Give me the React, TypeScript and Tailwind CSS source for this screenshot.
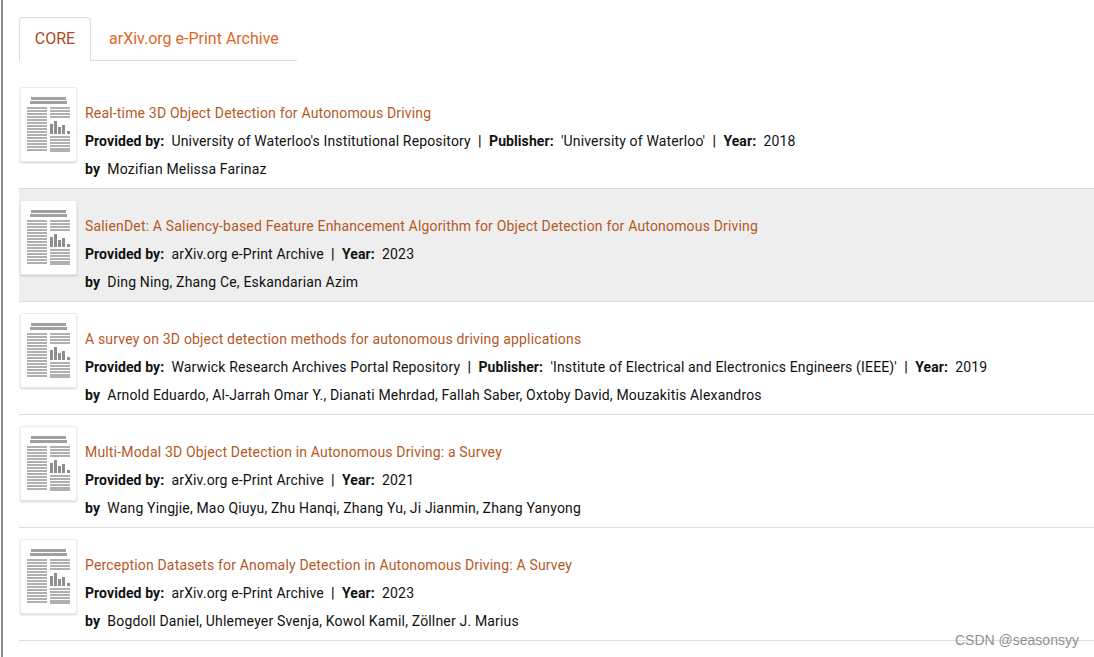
import React from 'react';

interface Meta {
  label: string;
  value: string;
}

interface Article {
  title: string;
  meta: Meta[];
  authors: string;
  highlighted?: boolean;
}

const articles: Article[] = [
  {
    title: 'Real-time 3D Object Detection for Autonomous Driving',
    meta: [
      { label: 'Provided by:', value: "University of Waterloo's Institutional Repository" },
      { label: 'Publisher:', value: "'University of Waterloo'" },
      { label: 'Year:', value: '2018' },
    ],
    authors: 'Mozifian Melissa Farinaz',
  },
  {
    title: 'SalienDet: A Saliency-based Feature Enhancement Algorithm for Object Detection for Autonomous Driving',
    meta: [
      { label: 'Provided by:', value: 'arXiv.org e-Print Archive' },
      { label: 'Year:', value: '2023' },
    ],
    authors: 'Ding Ning, Zhang Ce, Eskandarian Azim',
    highlighted: true,
  },
  {
    title: 'A survey on 3D object detection methods for autonomous driving applications',
    meta: [
      { label: 'Provided by:', value: 'Warwick Research Archives Portal Repository' },
      { label: 'Publisher:', value: "'Institute of Electrical and Electronics Engineers (IEEE)'" },
      { label: 'Year:', value: '2019' },
    ],
    authors: 'Arnold Eduardo, Al-Jarrah Omar Y., Dianati Mehrdad, Fallah Saber, Oxtoby David, Mouzakitis Alexandros',
  },
  {
    title: 'Multi-Modal 3D Object Detection in Autonomous Driving: a Survey',
    meta: [
      { label: 'Provided by:', value: 'arXiv.org e-Print Archive' },
      { label: 'Year:', value: '2021' },
    ],
    authors: 'Wang Yingjie, Mao Qiuyu, Zhu Hanqi, Zhang Yu, Ji Jianmin, Zhang Yanyong',
  },
  {
    title: 'Perception Datasets for Anomaly Detection in Autonomous Driving: A Survey',
    meta: [
      { label: 'Provided by:', value: 'arXiv.org e-Print Archive' },
      { label: 'Year:', value: '2023' },
    ],
    authors: 'Bogdoll Daniel, Uhlemeyer Svenja, Kowol Kamil, Zöllner J. Marius',
  },
];

const leftLines = Array.from({ length: 15 }, (_, i) => 10 + i * 3);
const rightLines = [10, 13, 16, 19, 39, 42, 45, 48, 51, 53];
const bars = [
  { x: 23, y: 27, w: 3 },
  { x: 27, y: 24, w: 3 },
  { x: 31, y: 30, w: 3 },
  { x: 35, y: 28, w: 3 },
  { x: 40, y: 34, w: 3 },
];

// Newspaper style thumbnail
function PaperIcon() {
  return (
    <svg width="44" height="56" viewBox="0 0 44 56" className="block">
      <rect x="4" y="0" width="35" height="3" fill="#a0a0a0" />
      <rect x="3" y="4" width="37" height="3" fill="#a0a0a0" />
      {leftLines.map((y) => (
        <rect key={y} x="0" y={y} width="20" height="2" fill="#b0b0b0" />
      ))}
      {rightLines.map((y) => (
        <rect key={y} x="23" y={y} width="20" height="2" fill="#b0b0b0" />
      ))}
      {bars.map((b) => (
        <rect key={b.x} x={b.x} y={b.y} width={b.w} height={37 - b.y} fill="#8e8e8e" />
      ))}
    </svg>
  );
}

function ArticleRow({ article }: { article: Article }) {
  return (
    <div
      className={`flex h-[113px] border-b border-[#dddddd] pt-[11px] ${
        article.highlighted ? 'bg-[#eeeeee]' : 'bg-white'
      }`}
    >
      <div className="ml-[1px] flex h-[75px] w-[57px] shrink-0 justify-center rounded-[2px] border border-[#ececec] bg-white pt-[9px] pl-[1px] shadow-[0_1px_2px_rgba(0,0,0,0.18)]">
        <PaperIcon />
      </div>
      <div className="ml-[8px] pt-[12px] text-[14px] leading-[28px] tracking-[0.175px] text-[#111111]">
        <div className="text-[#b5591f]">{article.title}</div>
        <div className="flex whitespace-pre tracking-[0.15px]">
          {article.meta.map((m, i) => (
            <span key={m.label}>
              {i > 0 && <span className="font-bold">{'  |  '}</span>}
              <span className="font-bold tracking-[0.09px]">{m.label}</span>
              {'  '}
              {m.value}
            </span>
          ))}
        </div>
        <div className="whitespace-pre">
          <span className="font-bold tracking-[0.09px]">by</span>
          {'  '}
          {article.authors}
        </div>
      </div>
    </div>
  );
}

export default function App() {
  return (
    <div className="relative h-[657px] w-[1094px] overflow-hidden bg-white font-['Roboto',sans-serif]">
      <div className="ml-[1px] h-full border-l-2 border-[#8a8a8a] pt-[17px] pl-[16px]">
        {/* Tabs */}
        <div className="flex h-[44px] w-[278px] border-b border-[#dddddd] text-[16px]">
          <div className="flex h-[44px] w-[72px] items-center justify-center rounded-t-[4px] border border-b-0 border-[#dddddd] bg-white pb-[1px] text-[#a9481f]">
            CORE
          </div>
          <div className="flex h-[43px] items-center pl-[18px] text-[#e0662a]">arXiv.org e-Print Archive</div>
        </div>

        {/* Results */}
        <div className="mt-[15px]">
          {articles.map((article) => (
            <ArticleRow key={article.title} article={article} />
          ))}
        </div>
      </div>

      {/* Watermark */}
      <div className="absolute top-[632px] left-[955px] font-['Liberation_Sans',sans-serif] text-[14px] leading-[16px] text-[#8f8f8f]">
        CSDN @seasonsyy
      </div>
    </div>
  );
}
